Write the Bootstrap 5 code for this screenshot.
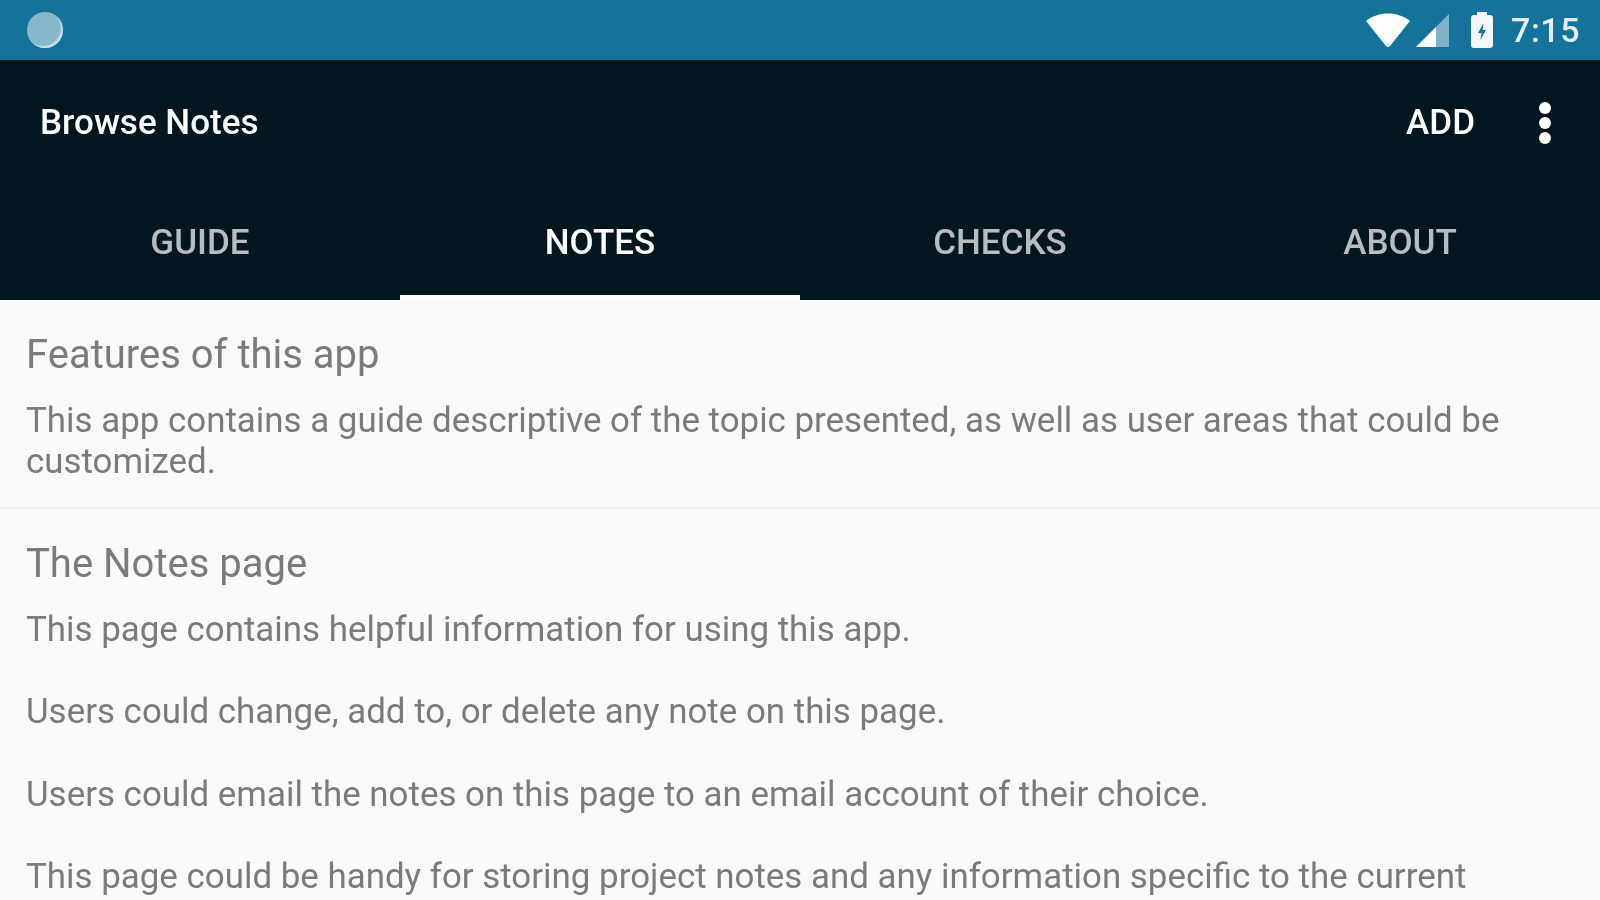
<!DOCTYPE html>
<html lang="en">
<head>
    <meta charset="UTF-8">
    <title>Browse Notes</title>
    <link href="https://cdn.jsdelivr.net/npm/bootstrap@5.3.0/dist/css/bootstrap.min.css" rel="stylesheet">
    <style>
        html, body { height: 900px; overflow: hidden; }
        body { background: #fafafa; font-family: Roboto, "Liberation Sans", sans-serif; color: #7b7b7b; }
        .status-strip { height: 60px; background: #15739b; padding: 0 20px 0 27px; color: #e3eff4; }
        .status-dot { width: 36px; height: 36px; border-radius: 50%; background: #86b8ca; box-shadow: inset -2px -2px 1px #c4e0e9; }
        .status-batt { margin-left: 20px; }
        .status-time { font-size: 34px; font-weight: 500; line-height: 1; letter-spacing: .5px; margin-left: 17px; }
        .app-head { background: #04161d; color: #fff; }
        .app-title { height: 122px; padding: 4px 49px 0 40px; }
        .app-title-text { font-size: 35px; font-weight: 500; }
        .app-add { font-size: 35px; font-weight: 500; margin-right: 64px; }
        .more-dots { width: 12px; }
        .more-dots i { display: block; width: 12px; height: 12px; border-radius: 50%; background: #fff; margin: 3px 0; }
        .tab-item { height: 118px; padding-top: 10px; color: #b6bcbf; font-size: 35px; font-weight: 500; border-bottom: 5px solid transparent; }
        .tab-item.on { color: #fff; border-bottom-color: #fff; }
        .note-block { padding: 31px 26px 25px; }
        .note-block + .note-block { border-top: 2px solid #eeeeee; }
        .note-name { font-size: 40px; line-height: 48px; font-weight: 400; margin-bottom: 21px; }
        .note-text { font-size: 34.9px; line-height: 41px; margin: 0; }
        .note-gap { margin-bottom: 41.4px; }
        /* the reference is an upscaled capture, everything is a bit soft */
        .status-strip > *, .app-title > *, .tab-item, .note-name, .note-text { filter: blur(.6px); }
    </style>
</head>
<body>

<!-- status bar -->
<div class="status-strip d-flex align-items-center justify-content-between">
    <div class="status-dot"></div>
    <div class="d-flex align-items-center">
        <svg width="46" height="36" viewBox="0 0 46 36"><path d="M1 9C13-1 33-1 45 9L25 34Q23 36 21 34Z" fill="#fff"/></svg>
        <svg width="35" height="35" viewBox="0 0 35 35" class="ms-1"><path d="M1 34L34 1V34Z" fill="#7fb3c9"/><path d="M1 34L21 14V34Z" fill="#fff"/></svg>
        <svg width="24" height="38" viewBox="0 0 24 38" class="status-batt"><path d="M7 1H17V4H20Q23 4 23 7V34Q23 37 20 37H4Q1 37 1 34V7Q1 4 4 4H7Z" fill="#f4f8fa"/><path d="M13.500 12L8 22H11.500L10.500 29L16 19H12.500Z" fill="#15739b"/></svg>
        <span class="status-time">7:15</span>
    </div>
</div>

<!-- toolbar + tabs -->
<div class="app-head">
    <div class="app-title d-flex align-items-center justify-content-between">
        <span class="app-title-text">Browse Notes</span>
        <div class="d-flex align-items-center">
            <span class="app-add">ADD</span>
            <div class="more-dots"><i></i><i></i><i></i></div>
        </div>
    </div>
    <div class="row g-0">
        <div class="col-3 tab-item d-flex align-items-center justify-content-center">GUIDE</div>
        <div class="col-3 tab-item on d-flex align-items-center justify-content-center">NOTES</div>
        <div class="col-3 tab-item d-flex align-items-center justify-content-center">CHECKS</div>
        <div class="col-3 tab-item d-flex align-items-center justify-content-center">ABOUT</div>
    </div>
</div>

<div class="note-block">
    <h5 class="note-name">Features of this app</h5>
    <p class="note-text">This app contains a guide descriptive of the topic presented, as well as user areas that could be customized.</p>
</div>
<div class="note-block">
    <h5 class="note-name">The Notes page</h5>
    <p class="note-text note-gap">This page contains helpful information for using this app.</p>
    <p class="note-text note-gap">Users could change, add to, or delete any note on this page.</p>
    <p class="note-text note-gap">Users could email the notes on this page to an email account of their choice.</p>
    <p class="note-text">This page could be handy for storing project notes and any information specific to the current</p>
</div>

<script src="https://cdn.jsdelivr.net/npm/bootstrap@5.3.0/dist/js/bootstrap.bundle.min.js"></script>
</body>
</html>
